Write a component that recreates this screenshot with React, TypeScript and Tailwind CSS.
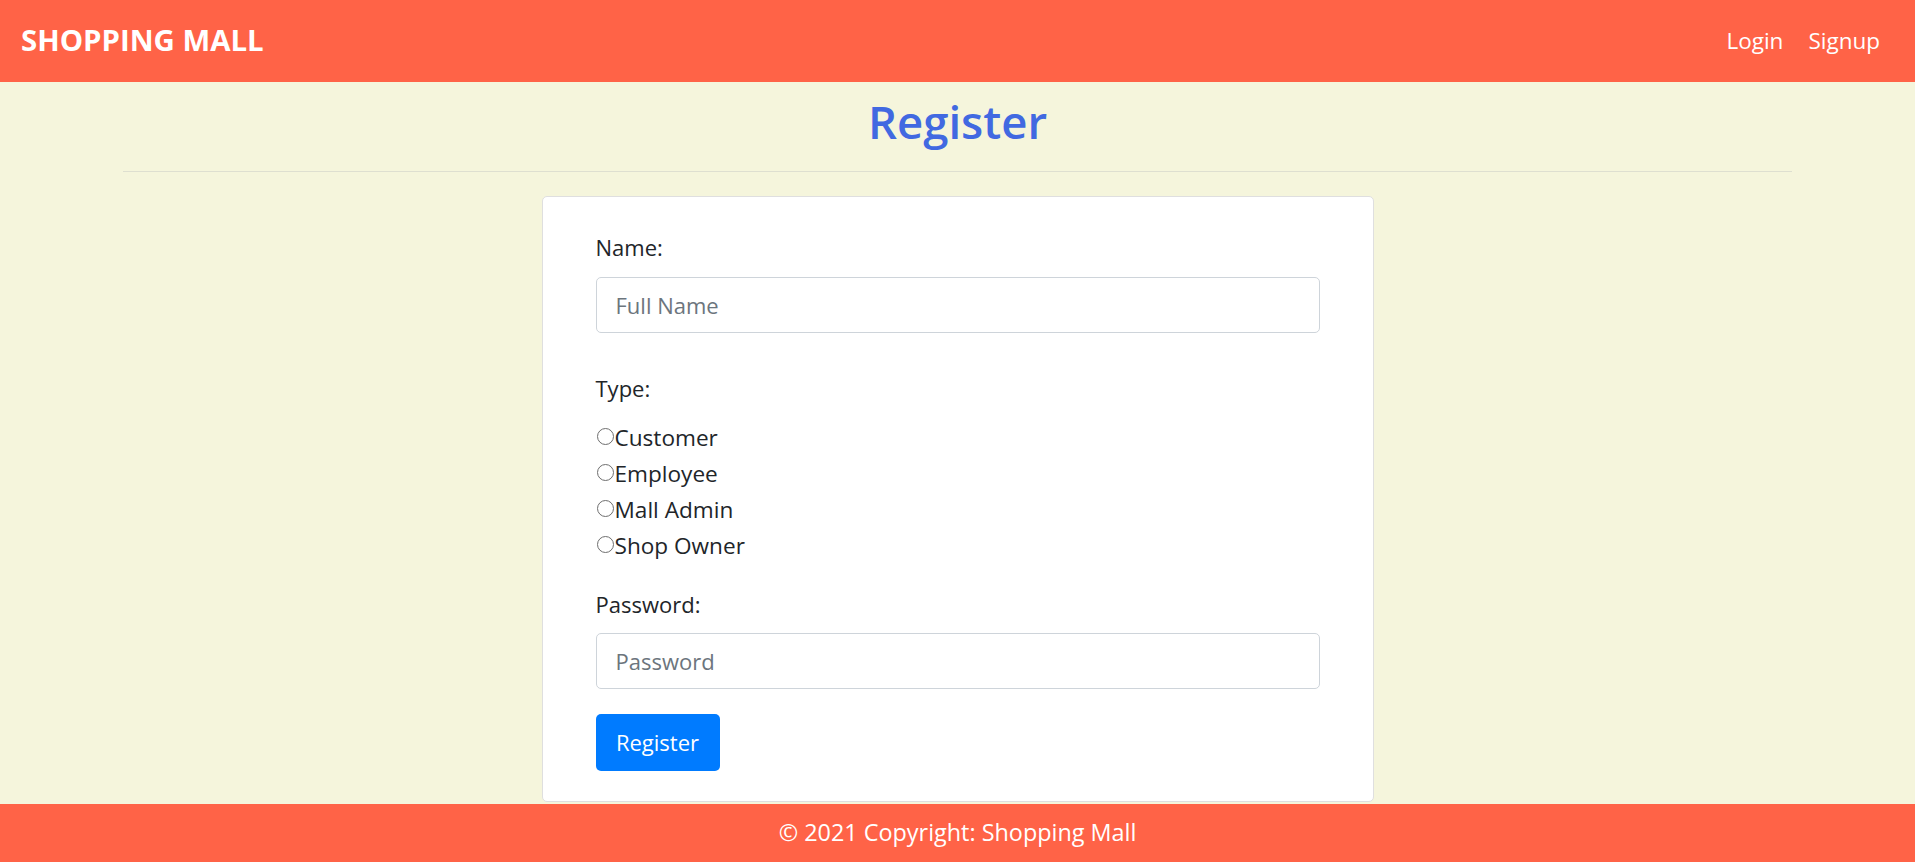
import { useState } from "react";

const types = ["Customer", "Employee", "Mall Admin", "Shop Owner"];

export default function App() {
  const [type, setType] = useState("");

  return (
    <div className="h-screen flex flex-col bg-[#f5f5dc] font-['Open_Sans',sans-serif] text-[#212529]">
      <nav className="h-[82px] shrink-0 bg-[#ff6347] flex items-center justify-between pl-[21px] pr-[35px]">
        <a href="#" className="text-white font-bold text-[29.4px] leading-none">
          SHOPPING MALL
        </a>
        <ul className="flex items-center gap-[25px] text-white text-[22.5px]">
          <li>
            <a href="#">Login</a>
          </li>
          <li>
            <a href="#">Signup</a>
          </li>
        </ul>
      </nav>

      <main className="flex-1 overflow-hidden">
        <h1 className="mt-[11px] text-center text-[45.5px] leading-[56px] font-semibold text-[#4169e1]">
          Register
        </h1>
        <hr className="mt-[22px] mx-[123px] border-t border-[#dedfd0]" />

        <div className="mt-[24px] mx-auto w-[832px] bg-white border border-[#dfdfdf] rounded-[5px] pt-[34px] pb-[30px] px-[53px] text-[22px]">
          <label className="block leading-[33px]">Name:</label>
          <input
            type="text"
            placeholder="Full Name"
            className="mt-[13px] block w-full h-[56px] px-[19px] border border-[#ced4da] rounded-[5px] placeholder:text-[#6c757d] outline-none"
          />

          <p className="mt-[39px] leading-[33px]">Type:</p>
          <div className="mt-[15px] text-[22.6px]">
            {types.map((t) => (
              <label key={t} className="flex items-center leading-[36px]">
                <input
                  type="radio"
                  name="type"
                  value={t}
                  checked={type === t}
                  onChange={() => setType(t)}
                  className="appearance-none shrink-0 m-0 ml-[1px] mr-[1px] w-[17px] h-[17px] -mt-[4px] rounded-full border-[1.5px] border-[#6e6e6e] bg-white checked:border-[5px] checked:border-[#0075ff]"
                />
                <span>{t}</span>
              </label>
            ))}
          </div>

          <label className="block mt-[24px] leading-[33px]">Password:</label>
          <input
            type="password"
            placeholder="Password"
            className="mt-[12px] block w-full h-[56px] px-[19px] border border-[#ced4da] rounded-[5px] placeholder:text-[#6c757d] outline-none"
          />

          <button className="mt-[25px] h-[57px] w-[124px] bg-[#007bff] text-white rounded-[5px]">
            Register
          </button>
        </div>
      </main>

      <footer className="h-[58px] shrink-0 bg-[#ff6347] flex items-center justify-center text-white text-[23.4px]">
        © 2021 Copyright: Shopping Mall
      </footer>
    </div>
  );
}
